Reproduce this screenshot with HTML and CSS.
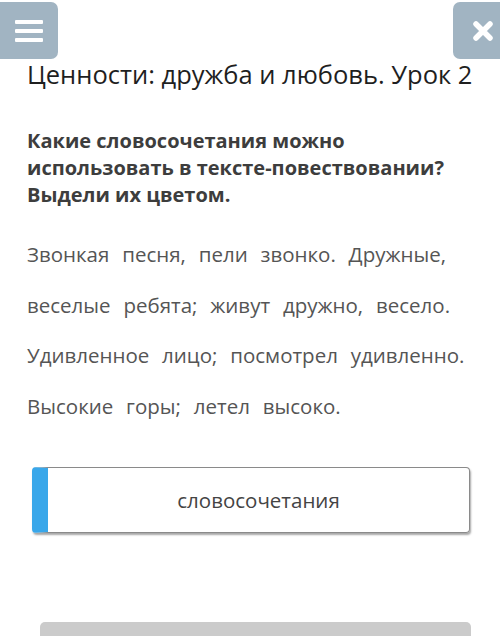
FILE: index.html
```html
<!DOCTYPE html>
<html lang="ru">
<head>
<meta charset="utf-8">
<title>Ценности: дружба и любовь. Урок 2</title>
<link rel="stylesheet" href="styles.css">
</head>
<body>
<div class="page">
  <header class="topbar">
    <button class="icon-btn menu" aria-label="Меню">
      <svg width="28" height="22" viewBox="0 0 28 22"><rect x="0" y="0" width="28" height="4" rx="1" fill="#fff"/><rect x="0" y="9" width="28" height="4" rx="1" fill="#fff"/><rect x="0" y="18" width="28" height="4" rx="1" fill="#fff"/></svg>
    </button>
    <button class="icon-btn close" aria-label="Закрыть">
      <svg width="20" height="20" viewBox="0 0 20 20"><path d="M3 3 L17 17 M17 3 L3 17" stroke="#fff" stroke-width="5.5" stroke-linecap="round"/></svg>
    </button>
  </header>
  <h1 class="title">Ценности: дружба и любовь. Урок 2</h1>
  <p class="question">Какие словосочетания можно использовать в тексте-повествовании? Выдели их цветом.</p>
  <div class="text">
    <p>Звонкая песня, пели звонко. Дружные,</p>
    <p>веселые ребята; живут дружно, весело.</p>
    <p>Удивленное лицо; посмотрел удивленно.</p>
    <p>Высокие горы; летел высоко.</p>
  </div>
  <div class="answer"><span class="answer-label">словосочетания</span></div>
  <div class="footer-bar"></div>
</div>
</body>
</html>
```

FILE: styles.css
```css
html, body {
  margin: 0;
  padding: 0;
  background: #fff;
}
body {
  font-family: "Open Sans", "Noto Sans", sans-serif;
  width: 500px;
  height: 636px;
  overflow: hidden;
}
.page {
  position: relative;
  height: 636px;
}
.topbar {
  display: flex;
  justify-content: space-between;
  padding-top: 2px;
  height: 57px;
}
.icon-btn {
  border: none;
  padding: 0;
  background: #a1b4c2;
  display: flex;
  align-items: center;
  justify-content: center;
  height: 57px;
  cursor: pointer;
}
.menu {
  width: 58px;
  border-radius: 0 7px 7px 0;
}
.close {
  width: 47px;
  border-radius: 7px 0 0 7px;
  padding-left: 12px;
}
.title {
  margin: 0;
  padding-left: 27px;
  font-weight: 400;
  font-size: 25.5px;
  line-height: 30px;
  color: #1f1f1f;
  white-space: nowrap;
}
.question {
  margin: 38px 0 0;
  padding-left: 27px;
  width: 440px;
  font-weight: 700;
  font-size: 20px;
  line-height: 27px;
  color: #3d3d3d;
}
.text {
  margin-top: 21px;
  padding-left: 27px;
}
.text p {
  margin: 0;
  font-size: 20.5px;
  line-height: 50.5px;
  color: #555;
  word-spacing: 7.5px;
  white-space: nowrap;
}
.answer {
  margin: 36px 0 0 32px;
  width: 438px;
  height: 66px;
  box-sizing: border-box;
  border: 1px solid #8a8a8a;
  border-left: 16px solid #39a7ea;
  border-radius: 4px;
  box-shadow: 1px 2px 2px rgba(0,0,0,0.35);
  display: flex;
  align-items: center;
  justify-content: center;
}
.answer-label {
  font-size: 20.5px;
  color: #444;
}
.footer-bar {
  position: absolute;
  left: 40px;
  top: 622px;
  width: 431px;
  height: 30px;
  background: #cbcbcb;
  border-radius: 5px;
}
```
